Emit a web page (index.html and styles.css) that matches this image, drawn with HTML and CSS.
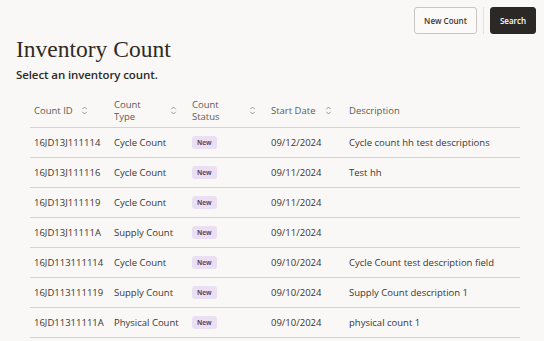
FILE: index.html
```html
<html>

<head>
    <title>Inventory Count</title>
    <link rel="stylesheet" href="styles.css">
</head>

<body>
    <div class="toolbar">
        <button class="btn btn-outline">New Count</button>
        <span class="toolbar-sep"></span>
        <button class="btn btn-dark">Search</button>
    </div>
    <h1 class="page-title">Inventory Count</h1>
    <div class="page-sub">Select an inventory count.</div>

    <table class="grid">
        <thead>
            <tr>
                <th><div class="th-in"><span>Count ID</span><svg class="sort" viewBox="0 0 8 10"><path d="M1.5 3.5 4 1l2.5 2.5M1.5 6.5 4 9l2.5-2.5"/></svg></div></th>
                <th><div class="th-in"><span>Count<br>Type</span><svg class="sort" viewBox="0 0 8 10"><path d="M1.5 3.5 4 1l2.5 2.5M1.5 6.5 4 9l2.5-2.5"/></svg></div></th>
                <th><div class="th-in"><span>Count<br>Status</span><svg class="sort" viewBox="0 0 8 10"><path d="M1.5 3.5 4 1l2.5 2.5M1.5 6.5 4 9l2.5-2.5"/></svg></div></th>
                <th><div class="th-in"><span>Start Date</span><svg class="sort" viewBox="0 0 8 10"><path d="M1.5 3.5 4 1l2.5 2.5M1.5 6.5 4 9l2.5-2.5"/></svg></div></th>
                <th><div class="th-in"><span>Description</span></div></th>
            </tr>
        </thead>
        <tbody>
            <tr><td>16JD13J111114</td><td>Cycle Count</td><td><span class="badge">New</span></td><td>09/12/2024</td><td>Cycle count hh test descriptions</td></tr>
            <tr><td>16JD13J111116</td><td>Cycle Count</td><td><span class="badge">New</span></td><td>09/11/2024</td><td>Test hh</td></tr>
            <tr><td>16JD13J111119</td><td>Cycle Count</td><td><span class="badge">New</span></td><td>09/11/2024</td><td></td></tr>
            <tr><td>16JD13J11111A</td><td>Supply Count</td><td><span class="badge">New</span></td><td>09/11/2024</td><td></td></tr>
            <tr><td>16JD113111114</td><td>Cycle Count</td><td><span class="badge">New</span></td><td>09/10/2024</td><td>Cycle Count test description field</td></tr>
            <tr><td>16JD113111119</td><td>Supply Count</td><td><span class="badge">New</span></td><td>09/10/2024</td><td>Supply Count description 1</td></tr>
            <tr><td>16JD11311111A</td><td>Physical Count</td><td><span class="badge">New</span></td><td>09/10/2024</td><td>physical count 1</td></tr>
        </tbody>
    </table>
</body>

</html>
```

FILE: styles.css
```css
body {
    margin: 0;
    padding: 7px 8px 0 16px;
    background: #f9f8f6;
    font-family: 'Open Sans', 'Noto Sans', sans-serif;
    color: #3a3632;
    overflow: hidden;
}

.toolbar {
    display: flex;
    justify-content: flex-end;
    align-items: center;
    gap: 6px;
}

.btn {
    height: 27px;
    border-radius: 3px;
    font-family: 'Open Sans', sans-serif;
    font-size: 8px;
    font-weight: 600;
    padding: 0;
    white-space: nowrap;
}

.btn-outline {
    width: 63px;
    background: #fbfaf9;
    border: 1px solid #c9c5c0;
    color: #3a3632;
}

.btn-dark {
    width: 46px;
    background: #2b2825;
    border: 1px solid #2b2825;
    color: #ffffff;
}

.toolbar-sep {
    width: 1px;
    height: 27px;
    background: #e3e0dc;
}

.page-title {
    margin: 2px 0 0 0;
    font-family: 'Liberation Serif', serif;
    font-weight: normal;
    font-size: 23.5px;
    line-height: 26px;
    color: #2d2a27;
}

.page-sub {
    margin-top: 5px;
    font-size: 11.5px;
    font-weight: 600;
    color: #2d2a27;
    letter-spacing: -0.1px;
}

.grid {
    margin: 13px 0 0 14px;
    width: 490px;
    border-collapse: collapse;
    table-layout: fixed;
    font-size: 9.5px;
}

.grid th:nth-child(1) { width: 76px; }
.grid th:nth-child(2) { width: 74px; }
.grid th:nth-child(3) { width: 75px; }
.grid th:nth-child(4) { width: 74px; }

.grid th {
    height: 32px;
    padding: 0 0 0 4px;
    text-align: left;
    font-weight: normal;
    color: #5f5a55;
    border-bottom: 1px solid #d6d3cf;
    line-height: 12px;
}

.th-in {
    display: flex;
    align-items: center;
}

.th-in span {
    flex: 1;
}

.grid th:nth-child(1) .th-in span {
    flex: 0 0 auto;
    margin-right: 8px;
}

.grid th:nth-child(4) .th-in span {
    flex: 0 0 auto;
    margin-right: 9px;
}

.sort {
    width: 7px;
    height: 9px;
    margin-right: 11px;
    fill: none;
    stroke: #8c8782;
    stroke-width: 1;
}

.grid td {
    height: 30px;
    padding: 0 0 0 4px;
    border-bottom: 1px solid #d6d3cf;
    white-space: nowrap;
    color: #3a3632;
}

.badge {
    display: inline-block;
    padding: 0 5px;
    height: 13px;
    line-height: 13px;
    border-radius: 3px;
    background: #ebe0f3;
    color: #5b4868;
    font-size: 6.5px;
    font-weight: 700;
    vertical-align: middle;
}
```
